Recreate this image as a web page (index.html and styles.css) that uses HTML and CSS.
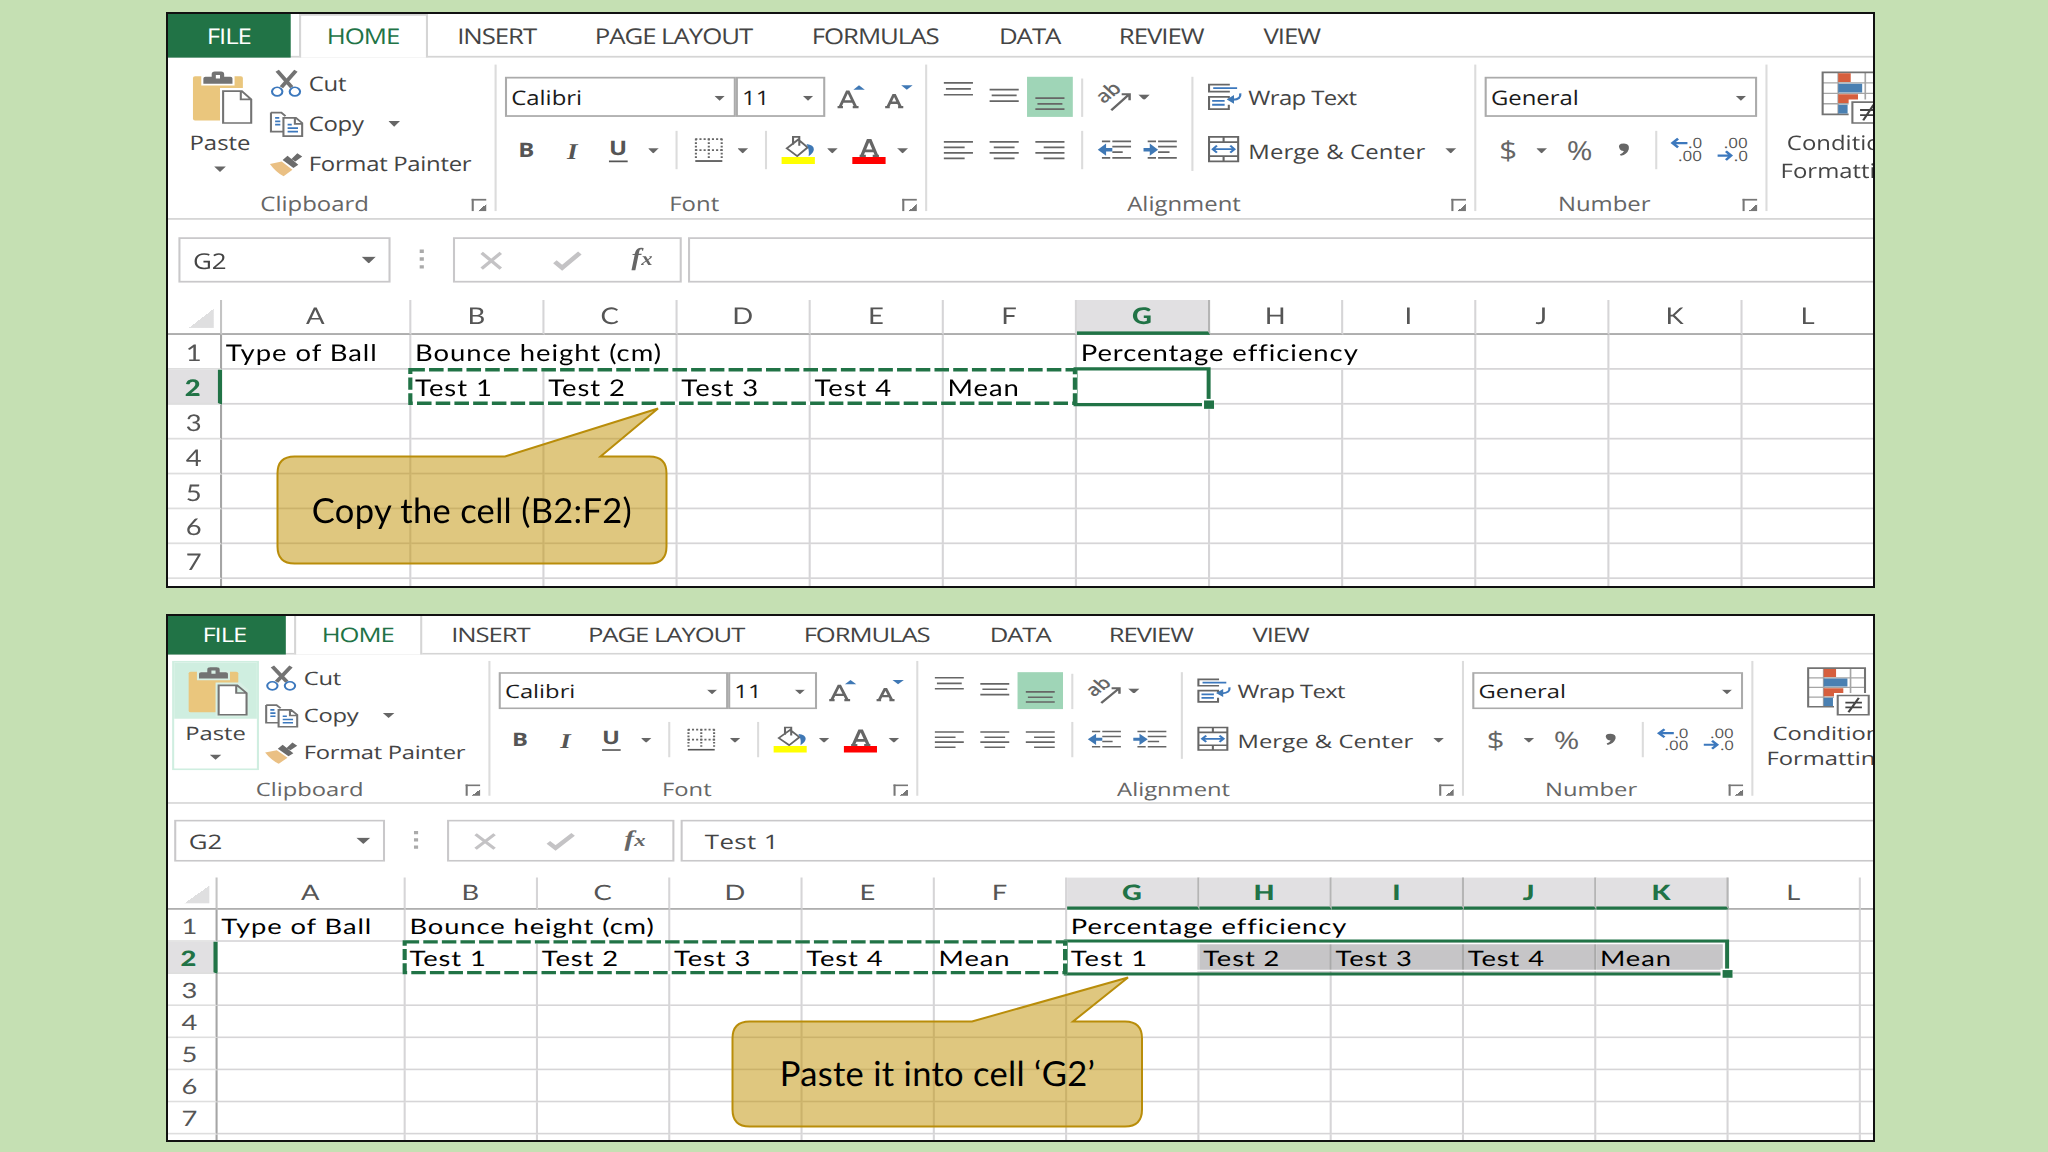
FILE: index.html
```html
<!DOCTYPE html>
<html lang="en">
<head>
<meta charset="utf-8">
<title>Copy and paste cells</title>
<link rel="stylesheet" href="styles.css">
</head>
<body>

<div class="panel first">
  <div class="window" data-sheet="copy"></div>
  <div class="callout">
    <svg width="392" height="158" viewBox="0 0 392 158">
      <path d="M18.500 49.500H229L382 1.500L324.500 49.500H373.500Q390.500 49.500 390.500 66.500V139.500Q390.500 156.500 373.500 156.500H18.500Q1.500 156.500 1.500 139.500V66.500Q1.500 49.500 18.500 49.500Z"/>
    </svg>
    <p>Copy the cell (B2:F2)</p>
  </div>
</div>

<div class="panel second">
  <div class="window" data-sheet="paste"></div>
  <div class="callout">
    <svg width="413" height="152" viewBox="0 0 413 152">
      <path d="M18.500 45.500H241L397 1.500L342 45.500H394Q411 45.500 411 62.500V133.500Q411 150.500 394 150.500H18.500Q1.500 150.500 1.500 133.500V62.500Q1.500 45.500 18.500 45.500Z"/>
    </svg>
    <p>Paste it into cell ‘G2’</p>
  </div>
</div>

<template id="ribbon">
  <div class="tabs">
    <span class="tab file">FILE</span>
    <span class="tab home">HOME</span>
    <span class="tab insert">INSERT</span>
    <span class="tab layout">PAGE LAYOUT</span>
    <span class="tab formulas">FORMULAS</span>
    <span class="tab data">DATA</span>
    <span class="tab review">REVIEW</span>
    <span class="tab view">VIEW</span>
  </div>

  <div class="ribbon">
    <div class="group clipboard">
      <div class="body">
        <div class="paste">
          <div class="paste-icon">
            <svg width="29" height="31" viewBox="0 0 29 31">
              <path d="M1 2.700H23Q24 2.700 24 3.700V28H1Q0 28 0 27V3.700Q0 2.700 1 2.700Z" fill="#eac67d"/>
              <path class="halo" d="M4 2H20V8H4Z"/>
              <path d="M5 7V4Q5 3 6 3H9V1.500Q9 0 10.500 0H13.500Q15 0 15 1.500V3H18Q19 3 19 4V7ZM11 2V4H13V2Z" fill="#737373" fill-rule="evenodd"/>
              <path class="halo" d="M13 9.500H25L29 14V31H13Z"/>
              <path d="M14.500 11.200H23.500L28 16V29.500H14.500ZM23 11.200V16H28" fill="#fff" stroke="#737373" stroke-width="1"/>
            </svg>
          </div>
          <div class="paste-text">Paste</div>
          <i class="arrow"></i>
        </div>
        <div class="list">
          <div class="item">
            <svg width="16" height="16" viewBox="0 0 16 16">
              <path d="M3.500 .5L10.500 10M12.500 .5L5.500 10" stroke="#737373" stroke-width="2" fill="none"/>
              <circle cx="3.500" cy="12.500" r="2.500" fill="none" stroke="#3c78bd"/>
              <circle cx="12" cy="12.500" r="2.500" fill="none" stroke="#3c78bd"/>
            </svg>Cut
          </div>
          <div class="item">
            <svg width="16" height="16" viewBox="0 0 16 16">
              <path d="M.5 1.500H5.500L7.500 3.500M6 12.500H.5V1.500M6.500 4.500H12.500L15.500 7.500V15H6.500ZM12 4.500V8H15.500" fill="none" stroke="#737373"/>
              <path d="M2.500 4.500H4.500M2.500 6.500H5M2.500 8.500H5M8.500 8.500H10.500M8.500 10.500H13.500M8.500 12.500H13.500" stroke="#3c78bd"/>
            </svg>Copy<i class="arrow"></i>
          </div>
          <div class="item">
            <svg width="16" height="16" viewBox="0 0 17 16">
              <path d="M0 8L6 6.500L11.500 11.500L7 15.500Q3 13 0 8Z" fill="#eac084"/>
              <path d="M6.500 5.500L9 3L14.500 8.500L12 10.500ZM11 5L14 1.500L16.500 3.500L13 6.500Z" fill="#6b6b6b"/>
            </svg>Format Painter
          </div>
        </div>
      </div>
      <div class="caption"><span>Clipboard</span></div>
    </div>
    <i class="rule"></i>

    <div class="group font">
      <div class="body rows">
        <div class="row font-top">
          <div class="combo">Calibri<i class="arrow"></i></div>
          <div class="combo">11<i class="arrow"></i></div>
          <svg width="16" height="16" viewBox="0 0 16 16">
            <path d="M3 13.500L6.500 4.500H7.100L10.700 13.500M4.300 10.200H9.500M1.900 13.400H4.500M9.200 13.400H12" fill="none" stroke="#666" stroke-width="1.400"/>
            <path d="M9.500 3.500L12.200 .8L15 3.500Z" fill="#3f78b5"/>
          </svg>
          <svg width="16" height="16" viewBox="0 0 16 16">
            <path d="M3 13.500L5.800 6.500H6.400L9.200 13.500M4 10.900H8.200M1.800 13.400H4M8 13.400H10.500" fill="none" stroke="#666" stroke-width="1.400"/>
            <path d="M9.500 .8L12.200 3.500L15 .8Z" fill="#3f78b5"/>
          </svg>
        </div>
        <div class="row font-bottom">
          <b class="glyph">B</b>
          <b class="glyph italic">I</b>
          <b class="glyph under">U</b>
          <i class="arrow"></i>
          <i class="rule short"></i>
          <svg width="14" height="14" viewBox="0 0 14 14">
            <path d="M.5 .8H13.500M.5 7H13.500" stroke="#666" stroke-dasharray="1 1"/>
            <path d="M.8 .5V12.500M7 .5V12.500M13.200 .5V12.500" stroke="#666" stroke-dasharray="1 1"/>
            <path d="M.5 13.300H13.500" stroke="#555"/>
          </svg>
          <i class="arrow"></i>
          <i class="rule short"></i>
          <svg width="16" height="16" viewBox="0 0 16 16">
            <path d="M2.500 7L8 2L12.500 6.500L7.500 11.500ZM5.500 5V.5H8.500V5.500" fill="none" stroke="#666"/>
            <path d="M12 4.500Q15.500 5 15.500 7.500Q15.500 9.500 13 11.500Q13.500 8 12 4.500Z" fill="#3f78b5"/>
            <path d="M0 12H16V16H0Z" fill="#ff0"/>
          </svg>
          <i class="arrow"></i>
          <svg width="16" height="16" viewBox="0 0 16 16">
            <path d="M4.500 11.500L7.600 2.500H8.600L11.800 11.500M5.500 8.500H10.500M3.500 11.500H6.500M9.800 11.500H12.800" fill="none" stroke="#666" stroke-width="1.600"/>
            <path d="M0 12H16V16H0Z" fill="red"/>
          </svg>
          <i class="arrow"></i>
        </div>
      </div>
      <div class="caption"><span>Font</span></div>
    </div>
    <i class="rule"></i>

    <div class="group alignment">
      <div class="body">
        <div class="rows aligns">
          <div class="row align-top">
            <svg class="key" width="22" height="23" viewBox="0 0 22 23"><path d="M4 3.500H18M5 7H17M4 10.300H18"/></svg>
            <svg class="key" width="22" height="23" viewBox="0 0 22 23"><path d="M4 7.300H18M5 10.600H17M4 14H18"/></svg>
            <svg class="key on" width="22" height="23" viewBox="0 0 22 23"><path d="M4 12.300H18M5 15.600H17M4 18.600H18"/></svg>
            <i class="rule short"></i>
            <svg width="16" height="16" viewBox="0 0 16 16">
              <text x="2.800" y="11.800" transform="rotate(-42 2.800 11.800)" class="ab">ab</text>
              <path d="M6.500 15.200L15 6.200M11.500 6H15.300V9.500" fill="none" stroke="#666" stroke-width="1.200"/>
            </svg>
            <i class="arrow"></i>
          </div>
          <div class="row align-bottom">
            <svg class="key" width="22" height="23" viewBox="0 0 22 23"><path d="M4 6.300H18M4 9.500H14M4 12.600H18M4 15.800H14"/></svg>
            <svg class="key" width="22" height="23" viewBox="0 0 22 23"><path d="M4 6.300H18M6 9.500H16M4 12.600H18M6 15.800H16"/></svg>
            <svg class="key" width="22" height="23" viewBox="0 0 22 23"><path d="M4 6.300H18M8 9.500H18M4 12.600H18M8 15.800H18"/></svg>
            <i class="rule short"></i>
            <svg width="16" height="16" viewBox="0 0 16 16">
              <path d="M2 3H6M7 3H16M7 6.100H16M7 9.200H12M2 12.500H6M7 12.500H16" stroke="#666"/>
              <path d="M0 7.800L4 4.300V6.800H7V8.800H4V11.300Z" fill="#3f78b5"/>
            </svg>
            <svg width="16" height="16" viewBox="0 0 16 16">
              <path d="M2 3H6M7 3H16M7 6.100H16M7 9.200H12.500M2 12.500H6M7 12.500H16" stroke="#666"/>
              <path d="M7 7.800L3 4.300V6.800H0V8.800H3V11.300Z" fill="#3f78b5"/>
            </svg>
          </div>
        </div>
        <i class="rule tall"></i>
        <div class="rows wraps">
          <div class="row item">
            <svg width="16" height="16" viewBox="0 0 16 16">
              <path d="M10 1V.5H.5V4.500H10V4M10 12V14.500H.5V7.500H10V8.500" fill="none" stroke="#666"/>
              <path d="M2.500 2.500H14M2 9.800H8M2 12H8M15.500 5.500Q16 9 12 9.200" fill="none" stroke="#3c78bd" stroke-width="1.100"/>
              <path d="M9 9L12.500 6.500V11.500Z" fill="#3f78b5"/>
            </svg><span>Wrap Text</span>
          </div>
          <div class="row item merge">
            <svg width="16" height="16" viewBox="0 0 16 16">
              <path d="M.5 .5H14.500V14.500H.5ZM.5 3.500H14.500M.5 11.500H14.500M7.500 .5V3.500M7.500 11.500V14.500" fill="none" stroke="#666"/>
              <path d="M2.500 7.500H12.500M4.300 5.500L2.300 7.500L4.300 9.500M10.700 5.500L12.700 7.500L10.700 9.500" fill="none" stroke="#3c78bd" stroke-width="1.100"/>
            </svg><span>Merge &amp; Center</span><i class="arrow"></i>
          </div>
        </div>
      </div>
      <div class="caption"><span>Alignment</span></div>
    </div>
    <i class="rule"></i>

    <div class="group number">
      <div class="body rows">
        <div class="row"><div class="combo">General<i class="arrow"></i></div></div>
        <div class="row number-bottom">
          <span class="sign">$</span>
          <i class="arrow"></i>
          <span class="sign percent">%</span>
          <svg width="6" height="8" viewBox="0 0 6 8"><path d="M1 3.500Q-.5 .3 3 .3Q5.800 .5 5.300 3.500Q4.500 6.500 1.500 7.300L1 6.500Q2.500 5.800 3 4.500Q1.500 4.600 1 3.500Z" fill="#666"/></svg>
          <i class="rule short"></i>
          <svg width="16" height="16" viewBox="0 0 16 16">
            <path d="M1 4H8.500M4 1.500L1.300 4L4 6.500" fill="none" stroke="#3c78bd" stroke-width="1.300"/>
            <text x="8.800" y="7" class="digits">.0</text>
            <text x="4" y="14.300" class="digits">.00</text>
          </svg>
          <svg width="16" height="16" viewBox="0 0 16 16">
            <path d="M1 11.200H7.500M5 8.700L7.500 11.200L5 13.700" fill="none" stroke="#3c78bd" stroke-width="1.300"/>
            <text x="4" y="7" class="digits">.00</text>
            <text x="8.800" y="14.300" class="digits">.0</text>
          </svg>
        </div>
      </div>
      <div class="caption"><span>Number</span></div>
    </div>
    <i class="rule"></i>

    <div class="group styles">
      <svg width="31" height="31" viewBox="0 0 31 31">
        <path d="M.5 .5H28V24.500H.5Z" fill="#fff"/>
        <path d="M.5 6.500H28M.5 12.500H28M.5 18.500H28M8 .5V24.500M21 .5V24.500" stroke="#a5a5a5" stroke-width=".8"/>
        <path d="M.5 .5H28V24.500H.5Z" fill="none" stroke="#737373"/>
        <path d="M8 1H14V6H8ZM8 13H17.500V18H8Z" fill="#d65f3e"/>
        <path d="M8 7H19.500V12H8ZM8 19H12.500V24H8Z" fill="#4a80b2"/>
        <path d="M13 16H31V31H13Z" fill="#fff"/>
        <path d="M14.800 17.500H29.800V29.500H14.800Z" fill="#fff" stroke="#737373"/>
        <path d="M18.500 22H26.500M18.500 25H26.500M25 19L20 28" stroke="#444" stroke-width="1.100"/>
      </svg>
      <div class="cond">Conditional</div>
      <div class="fmt">Formatting</div>
    </div>
  </div>

  <div class="formula-bar">
    <div class="box name-box">G2<i class="arrow big"></i></div>
    <svg class="dots" width="2" height="12" viewBox="0 0 2 12"><path d="M0 0H2V2H0ZM0 4.500H2V6.500H0ZM0 9H2V11H0Z" fill="#aaa"/></svg>
    <div class="box tools">
      <svg width="11" height="11" viewBox="0 0 11 11"><path d="M.8 1L10 10M10 1L.8 10" stroke="#c4c3c5" stroke-width="1.700"/></svg>
      <svg width="14" height="11" viewBox="0 0 14 11"><path d="M1 6L4.500 9.500L13 1" fill="none" stroke="#c4c3c5" stroke-width="2.400"/></svg>
      <span class="fx">f<small>x</small></span>
    </div>
    <div class="box formula"></div>
  </div>
</template>

<script src="sheet.js"></script>
</body>
</html>
```
FILE: styles.css
```css
body {
  margin: 0;
  width: 2048px;
  height: 1152px;
  overflow: hidden;
  background: #c5e0b3;
  font-family: "Open Sans", "Noto Sans", sans-serif;
  text-rendering: geometricPrecision;
}

svg {
  display: block;
  flex: none;
  overflow: visible;
}

.panel {
  position: relative;
  box-sizing: border-box;
  width: 1709px;
  margin-left: 166px;
  border: 2px solid #111;
  background: #fff;
  overflow: hidden;
}

.first {
  height: 576px;
  margin-top: 12px;
}

.second {
  height: 528px;
  margin-top: 26px;
}

/* the windows are laid out at screen size and stretched to fit the slide */
.window {
  position: relative;
  width: 832px;
  height: 340px;
  transform-origin: 0 0;
  background: #fff;
  color: #444;
  font-size: 11.5px;
}

.first .window {
  transform: scale(2.08, 1.744);
}

.second .window {
  transform: scale(2.067, 1.605) translate(-2px, -1px);
}

/* tabs */
.tabs {
  display: flex;
  box-sizing: border-box;
  height: 25px;
  border-bottom: 1px solid #d5d5d5;
}

.tab {
  box-sizing: border-box;
  height: 24px;
  line-height: 25.600px;
  font-size: 12.4px;
  letter-spacing: -.5px;
  text-align: center;
  white-space: nowrap;
}

.file {
  width: 58.500px;
  height: 25px;
  margin-right: 4.500px;
  background: #217346;
  color: #fff;
}

.home {
  width: 61.500px;
  height: 25px;
  border: 1px solid #d5d5d5;
  border-bottom: 0;
  background: #fff;
  color: #217346;
  line-height: 23.600px;
}

.insert { width: 67px; }
.layout { width: 103px; }
.formulas { width: 91px; }
.data { width: 57.500px; }
.review { width: 69px; }
.view { width: 56.500px; }

/* ribbon */
.ribbon {
  display: flex;
  box-sizing: border-box;
  height: 93px;
  padding-top: 4px;
  border-bottom: 1px solid #d5d5d5;
}

.group {
  flex: none;
  height: 88px;
}

.clipboard { width: 157px; }
.font { width: 206px; }
.alignment { width: 263px; }
.number { width: 139px; }
.styles { width: 63px; }

.body {
  display: flex;
  height: 71.6px;
}

.caption {
  display: flex;
  align-items: center;
  height: 16px;
  line-height: 16px;
  color: #666;
}

.caption span {
  flex: 1;
  padding-top: 2.200px;
  text-align: center;
}

.caption::after {
  content: "";
  width: 7px;
  height: 7px;
  margin: 2px 4px 0 5px;
  background:
    linear-gradient(#777, #777) 0 0 / 7px 1px no-repeat,
    linear-gradient(#777, #777) 0 0 / 1px 7px no-repeat,
    linear-gradient(to bottom right, transparent 50%, #777 50%) 3px 3px / 4px 4px no-repeat;
}

.rule {
  flex: none;
  width: 1px;
  height: 84px;
  background: #dcdcdc;
}

.rule.short { height: 22px; }
.rule.tall { height: 54px; margin-top: 6.5px; }

.arrow {
  flex: none;
  width: 5.600px;
  height: 3.200px;
  background: #666;
  clip-path: polygon(0 0, 100% 0, 50% 100%);
}

.arrow.big {
  width: 7px;
  height: 4px;
}

/* clipboard */
.paste {
  display: flex;
  flex-direction: column;
  align-items: center;
  box-sizing: border-box;
  width: 42px;
  height: 68px;
  margin-left: 4px;
  border: 1px solid transparent;
}

.paste-icon {
  align-self: stretch;
  height: 35px;
  padding: 3.3px 0 0 7.400px;
  box-sizing: border-box;
}

.paste-text {
  line-height: 20px;
  margin-bottom: 2.400px;
}

.halo {
  fill: #fff;
}

.second .halo {
  fill: #d8f0e5;
}

.second .paste {
  border-color: #cfeee0;
}

.second .paste-icon {
  background: #cfeee0;
}

.list {
  margin-left: 2.800px;
}

.item {
  display: flex;
  align-items: center;
  height: 23px;
  gap: 3.400px;
  white-space: nowrap;
  letter-spacing: -.15px;
}

.list .item { margin-top: -.5px; margin-bottom: .5px; }
.list .item svg { margin-right: -.5px; }
.list .arrow { margin-left: 8.500px; }

/* two-row groups */
.rows {
  display: flex;
  flex-direction: column;
  gap: 8px;
  box-sizing: border-box;
  padding-top: 7.3px;
}

.row {
  display: grid;
  align-items: center;
  justify-items: center;
  height: 22.700px;
}

.row.item {
  display: flex;
  line-height: 16px;
}

.row.item span { padding-top: 2.600px; }
.wraps .item { letter-spacing: -.3px; }
.wraps .merge { letter-spacing: .04px; }

.font .rows { padding-left: 4px; }
.font-top { grid-template-columns: 111px 42.500px 25px 21px; }
.font-bottom { grid-template-columns: 22px 22px 22px 12px 10.200px 20px 13.600px 8.400px 23px 9.800px 25.400px 7px; margin-left: -.7px; }

.combo {
  display: flex;
  align-items: center;
  justify-content: space-between;
  justify-self: stretch;
  box-sizing: border-box;
  height: 22.700px;
  padding: 1px 4px 0 2px;
  border: 1px solid #ababab;
  color: #1a1a1a;
}

.glyph {
  font-size: 11.500px;
  line-height: 12px;
  padding-top: 1px;
  color: #555;
}

.italic {
  font-family: "Liberation Serif", serif;
  font-style: italic;
  font-size: 13px;
}

.under {
  width: 8.600px;
  height: 12px;
  text-align: center;
  border-bottom: 1px solid #555;
}

.aligns {
  width: 127px;
  padding-left: 4px;
}

.align-top { grid-template-columns: 22px 22px 22px 8.800px 22.400px 6.200px; justify-content: start; }
.align-bottom { grid-template-columns: 22px 22px 22px 8.800px 22.400px 21.600px; justify-content: start; }

.key { stroke: #666; }
.on { background: #9fd5b7; }

.ab {
  font-size: 10.500px;
  font-weight: 600;
  letter-spacing: -.3px;
  fill: #666;
}

.wraps {
  width: 133.500px;
  padding-left: 7px;
}

.wraps .arrow { margin-left: auto; margin-right: 7px; }

.number .rows { padding-left: 4px; }
.number .row { grid-template-columns: 131px; }
.number .number-bottom { grid-template-columns: 22.700px 9.400px 27.200px 15.700px 14.300px 16px 28px; }

.sign {
  font-size: 15px;
  line-height: 16px;
  padding-top: 1px;
  color: #666;
}

.digits {
  font-size: 8.200px;
  fill: #555;
}

.styles {
  padding-top: 4.300px;
  box-sizing: border-box;
  line-height: 16px;
}

.styles svg { margin-left: 26px; }
.cond { padding: 2.400px 0 0 9.300px; }
.fmt { padding: .2px 0 0 6.300px; }

/* formula bar */
.formula-bar {
  display: flex;
  align-items: center;
  height: 26px;
  margin-top: 10px;
  padding-left: 5px;
}

.box {
  display: flex;
  align-items: center;
  box-sizing: border-box;
  height: 26px;
  border: 1px solid #c9c8ca;
}

.name-box {
  width: 102px;
  padding: 0 6px;
  justify-content: space-between;
  font-size: 12.500px;
}

.dots { margin: 0 14.400px 0 13.700px; }

.tools {
  width: 109.500px;
  padding: 0 12.500px 0 12px;
  justify-content: space-between;
}

.fx {
  font: italic bold 14px/16px "Liberation Serif", serif;
  color: #666;
}

.fx small { font-size: 11px; }

.formula {
  flex: 1;
  margin-left: 3.600px;
  padding-left: 10.500px;
  font-size: 12.500px;
  letter-spacing: .2px;
}

/* sheet */
.sheet {
  position: relative;
  display: grid;
  grid-template-columns: 25.800px 91px repeat(12, 64px);
  grid-template-rows: repeat(9, 20px);
  margin-top: 10.400px;
  width: 1000px;
  font-family: Lato, sans-serif;
  font-size: 13.200px;
  line-height: 20.800px;
  letter-spacing: .46px;
  color: #000;
}

.sheet div {
  box-sizing: border-box;
  border-right: 1px solid #d6d5d7;
  border-bottom: 1px solid #d6d5d7;
  padding-left: 2px;
  white-space: nowrap;
}

.sheet .col,
.sheet .num {
  padding: 0;
  text-align: center;
  letter-spacing: 0;
  color: #555;
  border-bottom-color: #a5a5a5;
}

.sheet .col {
  line-height: 19.600px;
}

.sheet .num {
  border-right-color: #a5a5a5;
  border-bottom-color: #dedede;
}

.sheet .corner {
  border-right-color: #c4c4c4;
  border-bottom-color: #a5a5a5;
  background: linear-gradient(to bottom right, transparent 50%, #dfdfe0 50%) 10px 5px / 12px 11px no-repeat;
}

.sheet .picked {
  background: #e1e0e2;
  color: #217346;
  font-weight: 900;
}

.sheet .col.picked {
  border-bottom: 2px solid #217346;
  border-right-color: #b5b5b5;
}

.sheet .num.picked {
  border-right: 2px solid #217346;
}

.sheet .shade {
  background: #c6c5c7;
  border-right-color: #aaa;
}

.marks {
  position: absolute;
  left: 0;
  top: 0;
}

/* callouts */
.callout {
  position: absolute;
}

.first .callout {
  left: 108px;
  top: 393px;
  width: 392px;
}

.second .callout {
  left: 563px;
  top: 360px;
  width: 413px;
}

.callout path {
  fill: rgba(191, 144, 0, .5);
  stroke: #b98d0a;
  stroke-width: 2;
}

.callout p {
  position: absolute;
  left: 0;
  right: 0;
  bottom: 32px;
  margin: 0;
  font: 34.500px/44px Lato, sans-serif;
  letter-spacing: .3px;
  text-align: center;
  color: #000;
}
```
FILE: sheet.js
```js
var sheets = {
  copy: {
    formula: '',
    picked: ['G'],
    row2: ['', 'Test 1', 'Test 2', 'Test 3', 'Test 4', 'Mean'],
    selected: 64
  },
  paste: {
    formula: 'Test 1',
    picked: ['G', 'H', 'I', 'J', 'K'],
    row2: ['', 'Test 1', 'Test 2', 'Test 3', 'Test 4', 'Mean',
           'Test 1', 'Test 2', 'Test 3', 'Test 4', 'Mean'],
    selected: 320
  }
};
var letters = 'ABCDEFGHIJKLM'.split('');

function cell(cls, text, span) {
  var style = span ? ' style="grid-column: span ' + span + '"' : '';
  return '<div class="' + cls + '"' + style + '>' + (text || '') + '</div>';
}

// copied range (dashed) and current selection (solid, with fill handle)
function marks(width) {
  var right = 436.3 + width;
  return '<svg class="marks" width="860" height="70" viewBox="0 0 860 70">' +
    '<path d="M437.900 41H' + (right - 1.6) + 'V57.900H437.900Z" fill="none" stroke="#fff"/>' +
    '<path d="M436.300 39.500H' + right + 'V60H436.300Z" fill="none" stroke="#217346" stroke-width="1.900"/>' +
    '<path d="M116.500 40H436V59.200H116.500Z" fill="none" stroke="#fff" stroke-width="2"/>' +
    '<path d="M116.500 40H436V59.200H116.500Z" fill="none" stroke="#217346" stroke-width="2" stroke-dasharray="7 2"/>' +
    '<path d="M' + (right - 3.2) + ' 56.700h6v6h-6z" fill="#fff"/>' +
    '<path d="M' + (right - 2.2) + ' 57.600h4.800v4.800h-4.800z" fill="#217346"/></svg>';
}

function build(win) {
  var s = sheets[win.dataset.sheet];
  win.appendChild(document.getElementById('ribbon').content.cloneNode(true));
  win.querySelector('.formula').textContent = s.formula;

  var html = cell('corner');
  letters.forEach(function (l) {
    html += cell(s.picked.indexOf(l) >= 0 ? 'col picked' : 'col', l == 'M' ? '' : l);
  });

  html += cell('num', '1') + cell('', 'Type of Ball') + cell('', 'Bounce height (cm)', 2) +
    cell('') + cell('') + cell('') + cell('', 'Percentage efficiency', 3);
  for (var i = 0; i < 4; i++) html += cell('');

  for (var r = 2; r <= 8; r++) {
    html += cell(r == 2 ? 'num picked' : 'num', r < 8 ? r : '');
    for (var c = 0; c < 13; c++) {
      var text = r == 2 ? s.row2[c] : '';
      html += cell(text && c > 6 ? 'shade' : '', text);
    }
  }

  var sheet = document.createElement('div');
  sheet.className = 'sheet';
  sheet.innerHTML = html + marks(s.selected);
  win.appendChild(sheet);
}

document.querySelectorAll('.window').forEach(build);
```
